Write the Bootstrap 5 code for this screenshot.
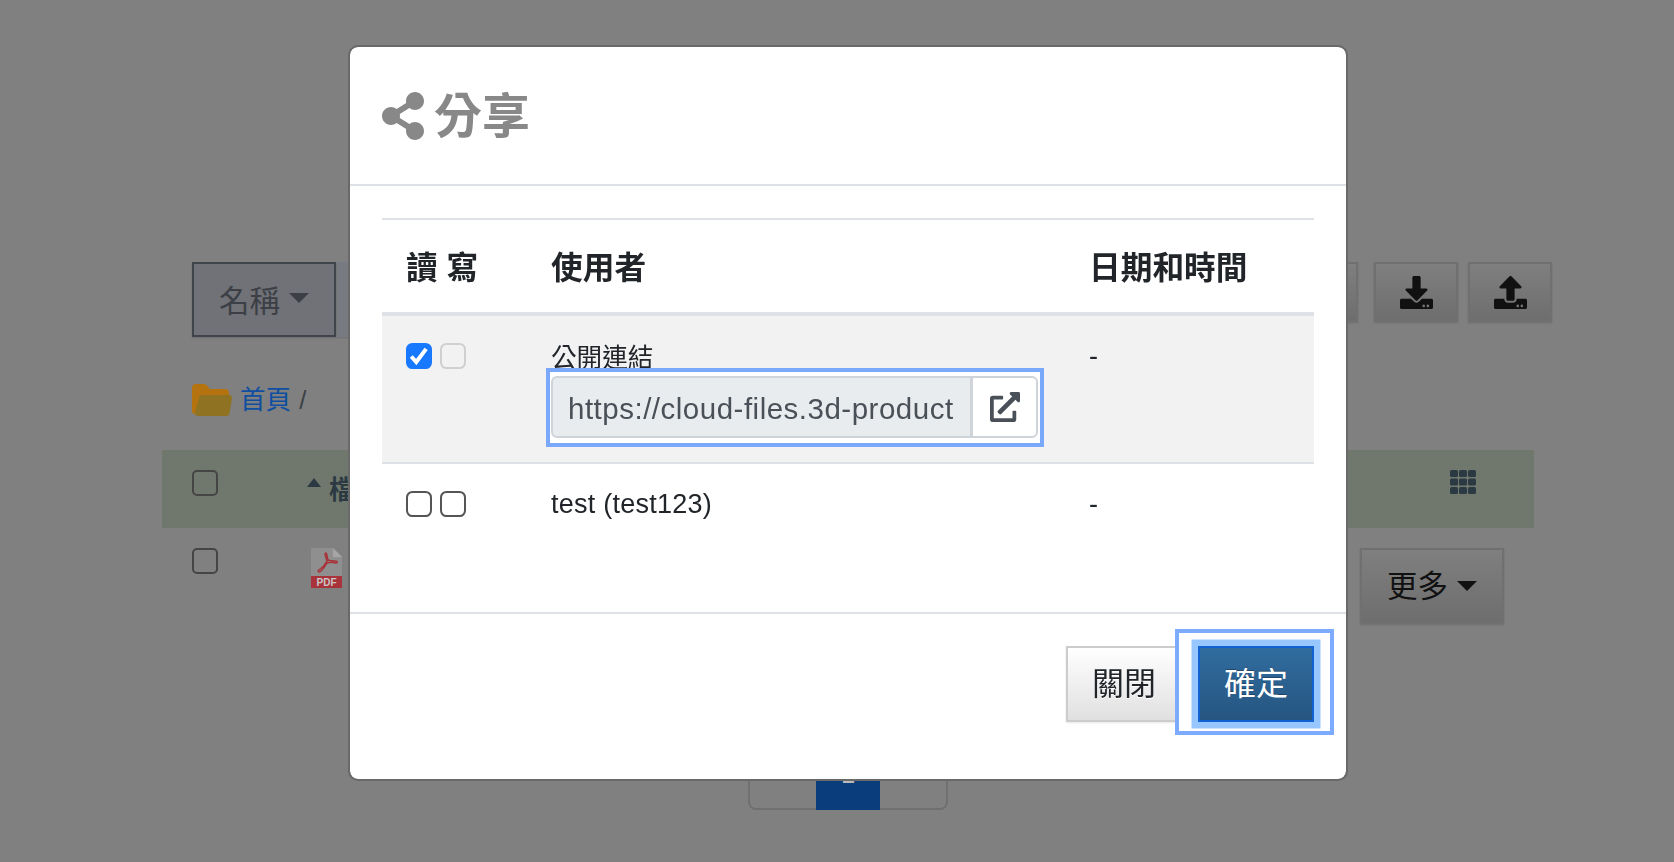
<!DOCTYPE html>
<html lang="zh-Hant">
<head>
<meta charset="utf-8">
<title>分享</title>
<link href="https://cdn.jsdelivr.net/npm/bootstrap@5.3.0/dist/css/bootstrap.min.css" rel="stylesheet">
<style>
html,body{height:100%;}
body{background:#808080;font-family:"Liberation Sans","Noto Sans CJK TC",sans-serif;font-size:25.6px;color:#212529;overflow:hidden;}
.pg-wrap{margin:0 140px 0 162px;padding-top:262px;}
.tool-row{padding-left:30px;margin-right:-18px;align-items:flex-start;}
.pg-btn{background:linear-gradient(#7f7f7f,#6e6e6e);border:2px solid #707070;border-radius:0;color:#111;font-size:30.5px;line-height:1;padding:0;display:inline-flex;align-items:center;justify-content:center;box-shadow:0 1px 2px rgba(0,0,0,.15);}
.sort-btn{width:144px;height:75px;background:#707277;border-color:#40454b;color:#3c4046;padding-top:4px;}
.sort-btn .caret-tri{position:relative;top:-4px;}
.next-btn{width:100px;height:75px;margin-left:1px;background:#777a80;border-color:#777c84;}
.side-btn{width:84px;height:60px;}
.dl-btn{margin:0 2px 0 8px;}
.caret-tri{display:inline-block;width:0;height:0;border-left:10px solid transparent;border-right:10px solid transparent;border-top:10px solid currentColor;margin-left:9px;}
.crumb{padding-left:30px;margin-top:47px;height:32px;font-size:25.6px;line-height:32px;}
.crumb a{color:#0f4ea0;text-decoration:none;}
.crumb span{color:#3c4046;}
.folder-ico{width:40px;height:32px;margin-right:8px;}
.file-head{margin-top:34px;height:78px;background:#70786e;padding:20px 58px 0 30px;color:#2b3a42;font-weight:700;}
.chk{width:26px;height:26px;border:2px solid #454545;border-radius:5px;flex:none;}
.sort-tri{display:inline-block;width:0;height:0;border-left:7.5px solid transparent;border-right:7.5px solid transparent;border-bottom:9px solid #2b3a42;margin:8px 8px 0 89px;}
.head-name{line-height:26px;margin-top:7px;}
.grid-ico{width:26px;height:24px;}
.file-row{padding:20px 30px 0;height:120px;}
.pdf-ico{width:31px;height:40px;margin-left:93px;}
.more-btn{width:144px;height:76px;}
.pager{margin:102px 0 0;justify-content:center;}
.pager .page-link{height:60px;width:69px;background:transparent;border:2px solid #707070;color:#333;font-size:25.6px;padding:0 0 11px;display:flex;align-items:center;justify-content:center;}
.pager .page-item.active .page-link{width:64px;background:#0a3d7b;border-color:#0a3d7b;color:#bbb;}
.pager .page-item:first-child .page-link{border-right:0;border-radius:8px 0 0 8px;}
.pager .page-item:last-child .page-link{border-left:0;border-radius:0 8px 8px 0;}

.share-dialog{max-width:1000px;width:1000px;margin:45px auto 0 348px;}
.share-dialog .modal-content{border:2px solid #696969;border-radius:10px;}
.share-head{padding:0 32px;height:139px;border-bottom:2px solid #dee2e6;border-radius:0;}
.share-title{font-size:48px;font-weight:700;color:#888;line-height:1;margin:0;display:flex;align-items:center;gap:10px;}
.share-word{margin-top:3px;}
.share-ico{width:42px;height:48px;fill:#888;}
.share-body{padding:32px 32px 0;}
.share-table{margin-bottom:62px;border-top:2px solid #dee2e6;table-layout:fixed;width:932px;}
.share-table th{font-size:31.7px;font-weight:700;line-height:40px;padding:28px 24px 24px;border-bottom:4px solid #dee2e6;vertical-align:top;}
.share-table td{padding:25px 24px 24px;line-height:35px;border-bottom:2px solid #dee2e6;font-size:25.6px;}
.share-table tr:last-child td{border-bottom:0;}
.share-table td.rw-cell{padding-top:27px;}
.share-table td.latin-cell{padding-top:23px;padding-bottom:28px;font-size:27px;letter-spacing:.25px;}
.col-rw{width:145px;}
.col-user{width:538px;}
.rw-check{width:26px;height:26px;margin:0 8px 0 0;border:2px solid #555;border-radius:5px;vertical-align:top;float:none;}
.rw-check:disabled{opacity:1;border-color:#d0d0d0;background-color:transparent;}
.rw-check:checked[type=checkbox]{border-color:#1878ff;background-color:#1878ff;--bs-form-check-bg-image:url("data:image/svg+xml,%3csvg xmlns='http://www.w3.org/2000/svg' viewBox='0 0 20 20'%3e%3cpath fill='none' stroke='%23fff' stroke-width='3.6' d='M3 10.500l4.500 5 9-12'/%3e%3c/svg%3e");}
.link-wrap{position:relative;width:487px;}
.link-wrap::before{content:"";position:absolute;left:-5px;right:-6px;top:-8px;bottom:-9px;background:#fff;border:4px solid #7aa9fb;}
.link-group{position:relative;height:62px;}
.link-input{font-size:29.5px;letter-spacing:.5px;height:62px;border:2px solid #ced4da;border-radius:6px 0 0 6px;background:#e9ecef!important;color:#495057;padding:3px 15px 0;}
.link-btn{width:67px;background:#fff;border:2px solid #ced4da;border-radius:0 6px 6px 0;padding:0;display:flex;align-items:center;justify-content:center;}
.link-btn svg{width:30px;height:30px;fill:#495057;}
.share-foot{border-top:2px solid #dee2e6;padding:32px 32px 57px;justify-content:flex-end;gap:16px;}
.share-foot>*{margin:0;}
.foot-btn{width:116px;height:76px;font-size:32px;line-height:1;padding:0;border-radius:0;}
.foot-close{background:linear-gradient(#fff,#e0e0e0);border:2px solid #ccc;color:#212529;text-shadow:0 1px 0 #fff;box-shadow:0 1px 2px rgba(0,0,0,.1);}
.ok-wrap{position:relative;}
.ok-wrap::before{content:"";position:absolute;left:-23px;right:-20px;top:-17px;bottom:-13px;background:#fff;border:4.5px solid #7dabff;}
.foot-ok{position:relative;background:linear-gradient(#306d9f,#265580);border:2px solid #0f62cf;color:#fff;box-shadow:0 0 0 6.5px #98c7ff;text-shadow:0 -1px 0 rgba(0,0,0,.3);}
</style>
</head>
<body>
<div class="pg-wrap">
  <div class="d-flex justify-content-between tool-row">
    <div class="d-flex">
      <button class="btn pg-btn sort-btn" type="button">名稱<span class="caret-tri"></span></button>
      <button class="btn pg-btn next-btn" type="button"></button>
    </div>
    <div class="d-flex gap-2">
      <button class="btn pg-btn side-btn" type="button"></button>
      <button class="btn pg-btn side-btn dl-btn" type="button" aria-label="下載"><svg width="33" height="33" viewBox="0 0 512 512" fill="#111"><path d="M216 0h80c13.3 0 24 10.7 24 24v168h87.7c17.8 0 26.7 21.5 14.1 34.1L269.7 378.3c-7.5 7.5-19.8 7.5-27.3 0L90.1 226.1c-12.6-12.6-3.7-34.1 14.1-34.1H192V24c0-13.3 10.7-24 24-24zm296 376v112c0 13.3-10.7 24-24 24H24c-13.3 0-24-10.7-24-24V376c0-13.3 10.7-24 24-24h146.7l49 49c20.1 20.1 52.5 20.1 72.6 0l49-49H488c13.3 0 24 10.7 24 24zm-124 88c0-11-9-20-20-20s-20 9-20 20 9 20 20 20 20-9 20-20zm64 0c0-11-9-20-20-20s-20 9-20 20 9 20 20 20 20-9 20-20z"/></svg></button>
      <button class="btn pg-btn side-btn" type="button" aria-label="上傳"><svg width="33" height="33" viewBox="0 0 512 512" fill="#111"><path d="M296 384h-80c-13.3 0-24-10.7-24-24V192h-87.7c-17.8 0-26.7-21.5-14.1-34.1L242.3 5.7c7.5-7.5 19.8-7.5 27.3 0l152.2 152.2c12.6 12.6 3.7 34.1-14.1 34.1H320v168c0 13.3-10.7 24-24 24zm216-8v112c0 13.3-10.7 24-24 24H24c-13.3 0-24-10.7-24-24V376c0-13.3 10.7-24 24-24h136v8c0 30.9 25.1 56 56 56h80c30.9 0 56-25.1 56-56v-8h136c13.3 0 24 10.7 24 24zm-124 88c0-11-9-20-20-20s-20 9-20 20 9 20 20 20 20-9 20-20zm64 0c0-11-9-20-20-20s-20 9-20 20 9 20 20 20 20-9 20-20z"/></svg></button>
    </div>
  </div>
  <div class="crumb d-flex align-items-center">
    <svg class="folder-ico" viewBox="0 0 40 32"><path d="M0 4a4 4 0 0 1 4-4h8a4 4 0 0 1 3 1.500l3 3.500h15a4 4 0 0 1 4 4v4H8L4 30H3a3 3 0 0 1-3-3z" fill="#b5730f"/><path d="M7 14a3 3 0 0 1 3-3h27a3 3 0 0 1 3 3.500l-2.500 14.500a3 3 0 0 1-3 3H6a3 3 0 0 1-3-3.500z" fill="#8f7322"/></svg>
    <a href="#">首頁</a><span class="ms-2">/</span>
  </div>
  <div class="file-head d-flex justify-content-between">
    <div class="d-flex align-items-start"><div class="chk"></div><span class="sort-tri"></span><span class="head-name">檔案名稱</span></div>
    <svg class="grid-ico" viewBox="0 0 26 24" fill="#2b3a42"><rect width="8" height="7" rx="1.5"/><rect x="9" width="8" height="7" rx="1.5"/><rect x="18" width="8" height="7" rx="1.5"/><rect y="8.500" width="8" height="7" rx="1.5"/><rect x="9" y="8.500" width="8" height="7" rx="1.5"/><rect x="18" y="8.500" width="8" height="7" rx="1.5"/><rect y="17" width="8" height="7" rx="1.5"/><rect x="9" y="17" width="8" height="7" rx="1.5"/><rect x="18" y="17" width="8" height="7" rx="1.5"/></svg>
  </div>
  <div class="file-row d-flex justify-content-between align-items-start">
    <div class="d-flex align-items-start"><div class="chk"></div>
      <svg class="pdf-ico" viewBox="0 0 31 40"><path d="M0 0h22l9 9v31H0z" fill="#8f8f8f"/><path d="M22 0l9 9h-9z" fill="#a5a5a5"/><path d="M15 5c-2 0 0 5 1 8-2 4-5 7-8 9-2 1 0 3 2 1 2-2 4-5 6-8 3-1 6-1 8 0 3 0 3-2 0-2-3 0-5 0-7-1-1-3-1-7-2-7z" fill="none" stroke="#a8333a" stroke-width="1.500"/><rect y="28" width="31" height="12" fill="#a8333a"/><text x="15.5" y="38" text-anchor="middle" font-family="Liberation Sans,sans-serif" font-size="10" font-weight="700" fill="#c9c9c9">PDF</text></svg>
    </div>
    <button class="btn pg-btn more-btn" type="button">更多<span class="caret-tri"></span></button>
  </div>
  <ul class="pagination pager">
    <li class="page-item"><a class="page-link" href="#">«</a></li>
    <li class="page-item active"><a class="page-link" href="#">1</a></li>
    <li class="page-item"><a class="page-link" href="#">»</a></li>
  </ul>
</div>

<div class="modal d-block" tabindex="-1">
  <div class="modal-dialog share-dialog">
    <div class="modal-content">
      <div class="modal-header share-head">
        <h5 class="share-title"><svg class="share-ico" viewBox="0 0 448 512"><path d="M352 320c-22.608 0-43.387 7.819-59.79 20.895l-102.486-64.054a96.551 96.551 0 0 0 0-41.683l102.486-64.054C308.613 184.181 329.392 192 352 192c53.019 0 96-42.981 96-96S405.019 0 352 0s-96 42.981-96 96c0 7.158.79 14.13 2.276 20.841L155.79 180.895C139.387 167.819 118.608 160 96 160c-53.019 0-96 42.981-96 96s42.981 96 96 96c22.608 0 43.387-7.819 59.79-20.895l102.486 64.054A96.301 96.301 0 0 0 256 416c0 53.019 42.981 96 96 96s96-42.981 96-96-42.981-96-96-96z"/></svg><span class="share-word">分享</span></h5>
      </div>
      <div class="modal-body share-body">
        <table class="table table-striped share-table">
          <thead><tr><th class="col-rw text-nowrap">讀 寫</th><th class="col-user">使用者</th><th>日期和時間</th></tr></thead>
          <tbody>
            <tr>
              <td class="text-nowrap rw-cell"><input class="form-check-input rw-check" type="checkbox" checked><input class="form-check-input rw-check" type="checkbox" disabled></td>
              <td>公開連結
                <div class="link-wrap">
                  <div class="input-group link-group">
                    <input class="form-control link-input" type="text" readonly value="https://cloud-files.3d-product">
                    <button class="btn link-btn" type="button" aria-label="開啟"><svg viewBox="0 0 512 512"><path d="M432,320H400a16,16,0,0,0-16,16V448H64V128H208a16,16,0,0,0,16-16V80a16,16,0,0,0-16-16H48A48,48,0,0,0,0,112V464a48,48,0,0,0,48,48H400a48,48,0,0,0,48-48V336A16,16,0,0,0,432,320ZM488,0h-128c-21.37,0-32.05,25.91-17,41l35.73,35.73L135,320.37a24,24,0,0,0,0,34L157.67,377a24,24,0,0,0,34,0L435.28,133.32,471,169c15,15,41,4.5,41-17V24A24,24,0,0,0,488,0Z"/></svg></button>
                  </div>
                </div>
              </td>
              <td class="latin-cell">-</td>
            </tr>
            <tr>
              <td class="text-nowrap rw-cell"><input class="form-check-input rw-check" type="checkbox"><input class="form-check-input rw-check" type="checkbox"></td>
              <td class="latin-cell">test (test123)</td>
              <td class="latin-cell">-</td>
            </tr>
          </tbody>
        </table>
      </div>
      <div class="modal-footer share-foot">
        <button class="btn foot-btn foot-close" type="button">關閉</button>
        <div class="ok-wrap"><button class="btn foot-btn foot-ok" type="button">確定</button></div>
      </div>
    </div>
  </div>
</div>
<script src="https://cdn.jsdelivr.net/npm/bootstrap@5.3.0/dist/js/bootstrap.bundle.min.js"></script>
</body>
</html>
